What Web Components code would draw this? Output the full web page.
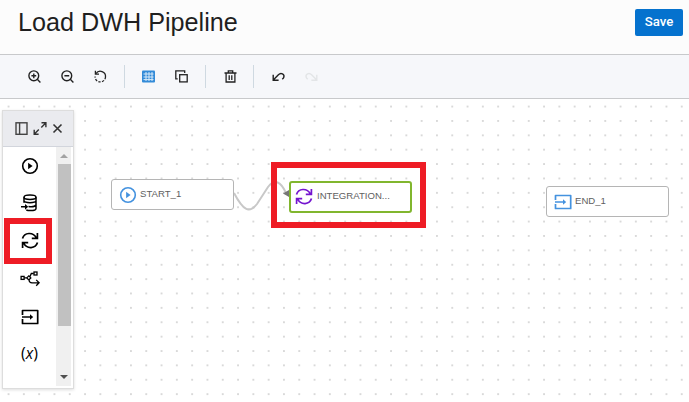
<!DOCTYPE html>
<html lang="en"><head><meta charset="utf-8"><title>Load DWH Pipeline</title>
<style>html,body{margin:0;height:100%;overflow:hidden;font-family:"Liberation Sans",Arial,sans-serif;background:#fff}</style>
</head><body>
<pipeline-app></pipeline-app>
<script>
const ICONS = {
  zoomin: [13, '<g fill="none" stroke="#222" stroke-width="1.4"><circle cx="5.8" cy="5.8" r="4.9"/><path d="M9.3 9.3L12.4 12.4M3.4 5.8h4.8M5.8 3.4v4.8"/></g>'],
  zoomout: [13, '<g fill="none" stroke="#222" stroke-width="1.4"><circle cx="5.8" cy="5.8" r="4.9"/><path d="M9.3 9.3L12.4 12.4M3.4 5.8h4.8"/></g>'],
  reset: [13, '<g fill="none" stroke="#222" stroke-width="1.3"><path d="M2 3.6A5.2 5.2 0 0 1 11.5 7"/><path d="M11.5 7A5.2 5.2 0 0 1 1.1 6.5" stroke-dasharray="2.3 1.4"/><path d="M1.4 .8v3.4h3.6"/></g>'],
  grid: [13, '<rect y=".5" width="13" height="12" rx="1" fill="#338bd8"/><path d="M4 2v9M7 2v9M10 2v9M1.5 4h10M1.5 7h10M1.5 9.6h10" stroke="#d8eaf9" stroke-width="1"/>'],
  copy: [13, '<g fill="none" stroke="#222" stroke-width="1.3"><rect x="4.7" y="4.7" width="7.5" height="7.2"/><path d="M2.7 8.8H.8V.9h8.9v2"/></g>'],
  trash: [13, '<g fill="none" stroke="#222" stroke-width="1.3"><path d="M.5 3h12M4.3 3V.9h4.4V3M2.1 3v9h8.8V3M5.2 5.2v4.7M7.8 5.2v4.7"/></g>'],
  undo: [13, '<g fill="none" stroke="#222" stroke-width="1.4"><path d="M1.2 4.8v5.4h5.4M1.3 10.1l5.1-5.3c2.6-2.7 6.4-.6 5.4 2.4-.3 1-.9 1.5-1.5 2.1"/></g>'],
  redo: [13, '<g fill="none" stroke="#e3e5e7" stroke-width="1.4"><path d="M11.8 4.8v5.4H6.4M11.7 10.1L6.6 4.8C4 2.1.2 4.2 1.2 7.2c.3 1 .9 1.5 1.5 2.1"/></g>'],
  panel: [13, '<g fill="none" stroke="#444" stroke-width="1.4"><rect x="1" y=".8" width="11" height="11.5"/><path d="M4.6 .8v11.5"/></g>'],
  expand: [13, '<g fill="none" stroke="#333" stroke-width="1.4"><path d="M8.5.8h4.4v4.4M12.7 1L8.3 5.4M1.2 7.8v4.4h4.4M1.4 12l4.4-4.4"/></g>'],
  close: [13, '<path d="M2.5 2.5l8 8M10.5 2.5l-8 8" stroke="#333" stroke-width="1.6"/>'],
  play: [18, '<circle cx="9" cy="9" r="7.3" fill="none" stroke="currentColor" stroke-width="1.6"/><path d="M7.1 5.7v6.6l4.5-3.3z" fill="currentColor"/>'],
  db: [18, '<g fill="none" stroke="currentColor" stroke-width="1.5"><ellipse cx="9" cy="3.2" rx="6" ry="2.2"/><path d="M3 3.2v5.6M15 3.2v11.2c0 1.3-2.4 2.2-5.7 2.2-1.5 0-3-.2-4-.6M3 7.2c1 1.9 11 1.9 12 0M7.5 12.6c3.5.4 6.9-.3 7.5-1.7M0 12.8h6"/></g><path d="M4 9.9v5.8l3.2-2.9z" fill="currentColor"/>'],
  sync: [18, '<g fill="none" stroke="currentColor" stroke-width="1.7"><path d="M1.5 6.4C3.4.3 12 -.3 15.4 5.8M16.4 1v5.4h-5.6M16.5 10.6C14.6 16.8 6 17.4 2.6 11.2M1.6 16v-5.4h5.6"/></g>'],
  branch: [20, '<g fill="none" stroke="currentColor" stroke-width="1.3"><rect x="1.1" y="7.4" width="3" height="3"/><path d="M4.1 8.9h2.5M8.8 6.9l2 2-2 2-2-2zM9.8 8l1.5-3.5h2.4M9 11c.2 2.2 1.2 2.8 3 2.8h6.8M16.2 10.9l2.9 2.9-2.9 2.9"/><rect x="14" y="3" width="3" height="3"/></g>'],
  exit: [18, '<g fill="none" stroke="currentColor" stroke-width="1.7" stroke-linejoin="round"><path d="M1.5 7V2.5h15.2v13H1.5V11"/><path d="M1 9h9" stroke-width="1.5"/></g><path d="M9 6.3v5.4l3.2-2.7z" fill="currentColor"/>']
};
const define = (name, html, init) => customElements.define(name, class extends HTMLElement {
  connectedCallback() {
    if (this.shadowRoot) return;
    const root = this.attachShadow({mode: 'open'});
    const t = document.createElement('template');
    t.innerHTML = html;
    root.append(t.content.cloneNode(true));
    if (init) init(this, root);
  }
});
define('ui-icon', '<style>:host{display:block;flex:none}svg{display:block;overflow:visible}</style><div></div>', (el, root) => {
  const [size, art] = ICONS[el.getAttribute('name')];
  root.querySelector('div').innerHTML = `<svg width="${size}" height="${size}" viewBox="0 0 ${size} ${size}">${art}</svg>`;
});
define('page-header', `<style>
 :host{display:flex;justify-content:space-between;align-items:flex-start;box-sizing:border-box;height:55px;background:#fcfcfc;border-bottom:1px solid #c8c9cb;padding:9px 6px 0 18px}
 h1{margin:-3px 0 0;font:400 25.2px/32px "Liberation Sans",Arial,sans-serif;color:#1f1f1f;white-space:nowrap}
 button{width:48px;height:27px;border:0;border-radius:2px;background:#0572ce;color:#fff;padding:0 0 2px;font:500 13.2px/20px Roboto,sans-serif}
</style><h1><slot></slot></h1><button>Save</button>`);
define('tool-bar', `<style>
 :host{display:flex;align-items:center;box-sizing:border-box;height:44px;background:#f6f7fa;border-bottom:1px solid #c8c9cb;padding:0 0 1px 28px}
 i{width:1px;height:23px;background:#cfd9e1;margin:0 17.4px 0 16.9px}
 .g{display:flex;gap:20px}
</style><div class="g"><ui-icon name="zoomin"></ui-icon><ui-icon name="zoomout"></ui-icon><ui-icon name="reset"></ui-icon></div><i></i>
<div class="g"><ui-icon name="grid"></ui-icon><ui-icon name="copy"></ui-icon></div><i></i>
<ui-icon name="trash"></ui-icon><i></i>
<div class="g"><ui-icon name="undo"></ui-icon><ui-icon name="redo"></ui-icon></div>`);
define('tool-palette', `<style>
 :host{display:flex;flex-direction:column;box-sizing:border-box;width:72px;height:279px;background:#fff;border:1px solid #ddd;box-shadow:0 1px 3px #0002}
 header{display:flex;align-items:center;box-sizing:border-box;height:36px;gap:5px;padding-left:12px;background:#eaebef;border-bottom:1px solid #d2d5dc}
 main{display:flex;flex:1;min-height:0}
 .items{width:53px;display:flex;flex-direction:column;align-items:center;color:#000}
 .cell{height:37.7px;display:flex;align-items:center}
 .db{padding-bottom:2px;box-sizing:border-box}
 .fx{font:italic 500 15.5px/20px "Open Sans","Noto Sans",sans-serif;padding-bottom:2px;box-sizing:border-box}
 .fx span{font-style:normal;font-weight:400;font-size:16px}
 .bar{width:15px;height:239px;background:#f0f0f0;display:flex;flex-direction:column;align-items:center}
 .up,.dn{border:4px solid transparent}
 .up{border-top:0;border-bottom-color:#a2a2a2;margin:7px 0 6px}
 .thumb{width:13px;height:162px;background:#c1c1c1;margin-left:1px}
 .dn{border-bottom:0;border-top-color:#505050;margin-top:49px}
</style><header><ui-icon name="panel"></ui-icon><ui-icon name="expand"></ui-icon><ui-icon name="close"></ui-icon></header>
<main><div class="items"><div class="cell"><ui-icon name="play"></ui-icon></div><div class="cell db"><ui-icon name="db"></ui-icon></div><div class="cell"><ui-icon name="sync"></ui-icon></div><div class="cell"><ui-icon name="branch"></ui-icon></div><div class="cell"><ui-icon name="exit"></ui-icon></div><div class="cell fx"><span>(</span>x<span>)</span></div></div>
<div class="bar"><div class="up"></div><div class="thumb"></div><div class="dn"></div></div></main>`);
define('flow-node', `<style>
 :host{display:flex;align-items:center;box-sizing:border-box;width:123px;height:31px;background:#fff;border:1px solid #b5b5b5;border-radius:3px;padding-left:7px;gap:3px}
 :host([active]){border:2px solid #81b62e;height:32px;padding-left:4px;gap:4px}
 ui-icon{color:var(--tint,#4492df)}
 span{font:9.6px/14px "Liberation Sans",Arial,sans-serif;color:#606060;white-space:nowrap;padding-bottom:2px}
</style><span><slot></slot></span>`, (el, root) => {
  const icon = document.createElement('ui-icon');
  icon.setAttribute('name', el.getAttribute('icon'));
  root.querySelector('span').before(icon);
});
define('flow-canvas', `<style>
 :host{display:block;position:relative;flex:1;overflow:hidden;background:#fff}
 .wires{position:absolute;inset:0}
 .n,tool-palette,.mark{position:absolute}
 .mark{box-sizing:border-box;border:6px solid #ee1c25}
</style><svg class="wires" width="689" height="303"><g id="dots" fill="#d9d9d9"></g>
<path d="M234 94C243 111 249 115 257 105L268 88C275 79 281 83 286 94" fill="none" stroke="#c8c8c8" stroke-width="2"/><path d="M283 94.5l6-3.5v7z" fill="#777"/></svg>
<flow-node class="n" style="left:111px;top:80px" icon="play">START_1</flow-node>
<flow-node class="n" style="left:289px;top:82px;--tint:#7414cf" icon="sync" active>INTEGRATION...</flow-node>
<flow-node class="n" style="left:546px;top:87px" icon="exit">END_1</flow-node>
<tool-palette style="left:2px;top:11px"></tool-palette>
<div class="mark" style="left:4px;top:119px;width:48px;height:46px"></div>
<div class="mark" style="left:271px;top:63px;width:155px;height:66px"></div>`, (el, root) => {
  let s = '';
  for (let r = 0; r < 21; r++) for (let c = 0; c < 45; c++)
    s += `<rect x="${(7.6 + c * 15.3).toFixed(1)}" y="${(6.6 + r * 14.38).toFixed(1)}" width="1.9" height="1.9"/>`;
  root.getElementById('dots').innerHTML = s;
});
define('pipeline-app', `<style>:host{display:flex;flex-direction:column;width:689px;height:402px}</style>
<page-header>Load DWH Pipeline</page-header><tool-bar></tool-bar><flow-canvas></flow-canvas>`);
</script></body></html>
